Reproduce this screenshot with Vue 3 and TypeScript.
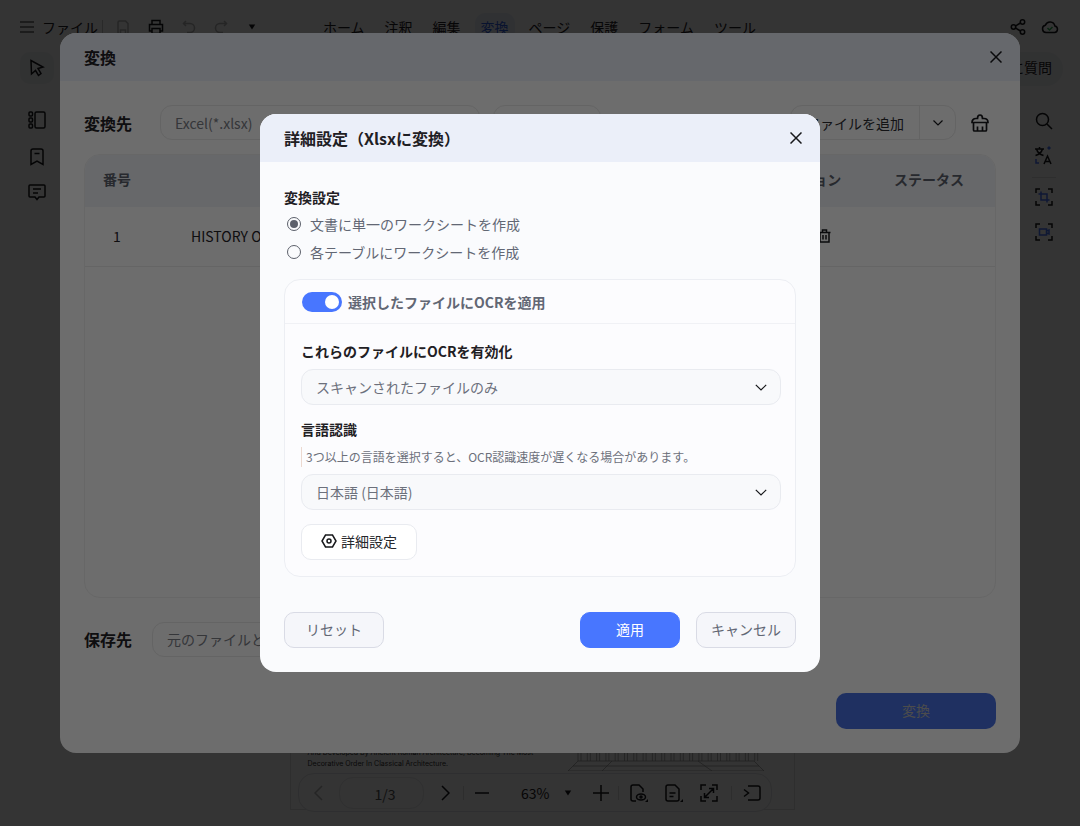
<script setup lang="ts">
const menus = ['ホーム', '注釈', '編集', '変換', 'ページ', '保護', 'フォーム', 'ツール']
const activeMenu = '変換'
const columnLines: number[] = Array.from({ length: 20 }, (_, i) => 10 + i * 9.3)
</script>

<template>
  <div class="app">
    <header class="topbar">
      <div class="top-left">
        <svg class="ico hamburger" width="14" height="12" viewBox="0 0 14 12"><path d="M0 1h14M0 6h14M0 11h14" /></svg>
        <span class="file-label">ファイル</span>
        <span class="top-sep"></span>
        <svg class="ico faded save" width="12" height="15" viewBox="0 0 12 15"><path d="M1 2.500a1.500 1.500 0 0 1 1.500-1.500H8.500l2.500 2.500v9a1.500 1.500 0 0 1-1.500 1.500h-7A1.500 1.500 0 0 1 1 12.500zM3.500 14v-4h5v4" /></svg>
        <svg class="ico print" width="16" height="16" viewBox="0 0 16 16"><path d="M4 5V1.500h8V5M4 12H1.500V5.500h13V12H12M4 9.500h8v5H4z" /></svg>
        <svg class="ico faded undo" width="14" height="14" viewBox="0 0 14 14"><path d="M4 1 1.500 3.500 4 6M2 3.500h6a4.500 4.500 0 0 1 0 9H5" /></svg>
        <svg class="ico faded redo" width="14" height="14" viewBox="0 0 14 14"><path d="M10 1l2.500 2.500L10 6M12 3.500H6a4.500 4.500 0 0 0 0 9h3" /></svg>
        <span class="caret top-caret"></span>
      </div>
      <nav class="menu">
        <span v-for="m in menus" :key="m" class="menu-item" :class="{ active: m === activeMenu }">{{ m }}</span>
      </nav>
      <div class="top-right">
        <svg class="ico" width="16" height="16" viewBox="0 0 16 16"><circle cx="3.500" cy="8" r="2.200" /><circle cx="12.500" cy="3" r="2.200" /><circle cx="12.500" cy="13" r="2.200" /><path d="M5.500 7l5-3M5.500 9l5 3" /></svg>
        <svg class="ico" width="18" height="16" viewBox="0 0 18 16"><path d="M5 13.500a3.700 3.700 0 0 1-.6-7.300 5 5 0 0 1 9.500.8 3.300 3.300 0 0 1-.4 6.500z" /><path class="green" d="m6.500 9 2 2 3-3" /></svg>
      </div>
    </header>

    <div class="workspace">
      <aside class="side-left">
        <div class="tool-box">
          <svg class="ico" width="16" height="18" viewBox="0 0 16 18"><path d="M2 1.500 14 8l-5 1.500 3 5-2.500 2-3-5L2.500 15z" /></svg>
        </div>
        <svg class="ico side-first" width="18" height="18" viewBox="0 0 18 18"><rect x="1" y="1" width="3.500" height="4" rx="1" /><rect x="1" y="7" width="3.500" height="4" rx="1" /><rect x="1" y="13" width="3.500" height="4" rx="1" /><rect x="7" y="1" width="10" height="16" rx="1.500" /></svg>
        <svg class="ico side-mark" width="14" height="18" viewBox="0 0 14 18"><path d="M1 3a2 2 0 0 1 2-2h8a2 2 0 0 1 2 2v13.500L7 13l-6 3.500zM4.500 5.500h5" /></svg>
        <svg class="ico" width="18" height="17" viewBox="0 0 18 17"><path d="M1 2a1 1 0 0 1 1-1h14a1 1 0 0 1 1 1v10a1 1 0 0 1-1 1h-5l-2 2.500L7 13H2a1 1 0 0 1-1-1zM5 5h8M5 9h5" /></svg>
      </aside>

      <main class="doc-area">
        <div class="doc-page">
          <div class="doc-strip">
            <p class="doc-text">And Developed By Ancient Roman Architecture, Becoming The Most<br />Decorative Order In Classical Architecture.</p>
            <svg class="colonnade" width="196" height="22" viewBox="0 0 196 22">
              <path v-for="x in columnLines" :key="x" :d="`M${x} 0v12M${x + 3} 0v12`" />
              <path d="M10 12h176M10 12 0 22M186 12l10 10M0 22h196M5 17h186M44 12l-10 10M130 12l14 10" />
            </svg>
          </div>
        </div>
      </main>

      <aside class="side-right">
        <div class="ask-pill">に質問</div>
        <svg class="ico search-ico" width="18" height="18" viewBox="0 0 18 18"><circle cx="7.500" cy="7.500" r="6" /><path d="m12 12 5 5" /></svg>
        <svg class="ico translate" width="20" height="20" viewBox="0 0 20 20"><path d="M1 4h9M5.500 2v2M2.500 4c1 3.500 3.500 5.500 7 6.500M8.500 4c-1 3.500-3.500 5.500-7 6.500" /><path d="m10 19 3.500-8 3.500 8M11 16.500h5" /><path class="blue" d="M2 14v4h3" /><path class="blue fill" d="m15 1 2 2-2 2-2-2z" /></svg>
        <span class="right-sep"></span>
        <svg class="ico" width="18" height="18" viewBox="0 0 18 18"><path d="M1 5V1h4M13 1h4v4M17 13v4h-4M5 17H1v-4" /><path class="blue" d="M6 3.500V12h8.500M3.500 6H12v8.500" /></svg>
        <svg class="ico video-ico" width="18" height="18" viewBox="0 0 18 18"><path d="M1 5V1h4M13 1h4v4M17 13v4h-4M5 17H1v-4" /><path class="blue" d="M4.500 6h7v6h-7zM11.500 8l2.500-1v4l-2.500-1" /></svg>
      </aside>

      <div class="pager">
        <svg class="ico faded" width="9" height="16" viewBox="0 0 9 16"><path d="M8 1 1 8l7 7" /></svg>
        <span class="page-input">1/3</span>
        <svg class="ico next" width="9" height="16" viewBox="0 0 9 16"><path d="m1 1 7 7-7 7" /></svg>
        <span class="pager-sep"></span>
        <svg class="ico minus" width="14" height="2" viewBox="0 0 14 2"><path d="M0 1h14" /></svg>
        <span class="zoom-value">63%</span>
        <span class="caret"></span>
        <svg class="ico plus" width="16" height="16" viewBox="0 0 16 16"><path d="M0 8h16M8 0v16" /></svg>
        <span class="pager-sep"></span>
        <svg class="ico view-ico" width="18" height="18" viewBox="0 0 18 18"><path d="M6 17H3a2 2 0 0 1-2-2V3a2 2 0 0 1 2-2h6l4 4v3" /><ellipse cx="11" cy="13" rx="4.500" ry="3" /><circle cx="11" cy="13" r="1" /><path class="fill" d="M18 15v3h-3z" /></svg>
        <svg class="ico doc-ico" width="18" height="18" viewBox="0 0 18 18"><path d="M3 1h7l4 4v10a2 2 0 0 1-2 2H3a2 2 0 0 1-2-2V3a2 2 0 0 1 2-2zM4.500 9h6M4.500 12.500h4" /><path class="fill" d="M18 15v3h-3z" /></svg>
        <svg class="ico fit-ico" width="18" height="18" viewBox="0 0 18 18"><path d="M1 6V1h5M12 1h5v5M17 12v5h-5M6 17H1v-5M4.500 13.500l9-9M9 4.500h4.500V9M4.500 9v4.500H9" /></svg>
        <span class="pager-sep"></span>
        <svg class="ico" width="18" height="16" viewBox="0 0 18 16"><path d="M5 1h10a2 2 0 0 1 2 2v10a2 2 0 0 1-2 2H5M1 4.500 5.500 8 1 11.500" /></svg>
      </div>
    </div>

    <div class="overlay">
      <section class="dialog convert">
        <header class="dialog-head convert-head">
          <h2>変換</h2>
          <svg class="ico close" width="12" height="12" viewBox="0 0 12 12"><path d="m.5.5 11 11M11.500.5l-11 11" /></svg>
        </header>
        <div class="convert-body">
          <div class="row">
            <label class="row-label">変換先</label>
            <div class="field format-field">Excel(*.xlsx)</div>
            <div class="field more-field"></div>
            <div class="add-group">
              <span class="add-text">ファイルを追加</span>
              <span class="add-arrow">
                <svg class="ico thin" width="10" height="6" viewBox="0 0 10 6"><path d="m.5.5 4.500 4.500L9.500.5" /></svg>
              </span>
            </div>
            <svg class="ico basket" width="18" height="18" viewBox="0 0 18 18"><path d="M1 8.500c0-2.500 1.500-4 4-4h1.500C6.500 2.500 7.500 1 9 1s2.500 1.500 2.500 3.500H13c2.500 0 4 1.500 4 4zM2.500 8.500V16a1 1 0 0 0 1 1h11a1 1 0 0 0 1-1V8.500M6.500 12.500V17M11.500 12.500V17" /></svg>
          </div>
          <div class="table">
            <div class="table-head">
              <span class="col-no">番号</span>
              <span class="col-action">アクション</span>
              <span class="col-status">ステータス</span>
            </div>
            <div class="table-row">
              <span class="cell-no">1</span>
              <span class="cell-name">HISTORY OF ARCHITECTURE</span>
              <svg class="ico row-trash" width="13" height="14" viewBox="0 0 13 14"><path d="M.5 3.500h12M2 3.500V13h9V3.500M4.500 3.500V1h4v2.500M5 6v4.500M8 6v4.500" /></svg>
            </div>
          </div>
          <div class="row save-row">
            <label class="row-label">保存先</label>
            <div class="field save-field">元のファイルと同じフォルダ</div>
          </div>
          <div class="convert-foot">
            <button class="convert-btn">変換</button>
          </div>
        </div>
      </section>
    </div>

    <div class="overlay">
      <section class="dialog settings">
        <header class="dialog-head settings-head">
          <h2>詳細設定（Xlsxに変換）</h2>
          <svg class="ico close" width="12" height="12" viewBox="0 0 12 12"><path d="m.5.5 11 11M11.500.5l-11 11" /></svg>
        </header>
        <div class="settings-body">
          <h3 class="group-title">変換設定</h3>
          <label class="radio-row"><span class="radio checked"></span>文書に単一のワークシートを作成</label>
          <label class="radio-row"><span class="radio"></span>各テーブルにワークシートを作成</label>

          <div class="ocr-card">
            <div class="ocr-head">
              <span class="switch"><span class="knob"></span></span>
              <span class="ocr-title">選択したファイルにOCRを適用</span>
            </div>
            <div class="ocr-body">
              <h4 class="ocr-label">これらのファイルにOCRを有効化</h4>
              <div class="select">
                <span>スキャンされたファイルのみ</span>
                <svg class="ico thin" width="12" height="7" viewBox="0 0 12 7"><path d="m.8.800 5.200 5.200L11.200.8" /></svg>
              </div>
              <h4 class="ocr-label lang-label">言語認識</h4>
              <p class="hint">3つ以上の言語を選択すると、OCR認識速度が遅くなる場合があります。</p>
              <div class="select">
                <span>日本語 (日本語)</span>
                <svg class="ico thin" width="12" height="7" viewBox="0 0 12 7"><path d="m.8.800 5.200 5.200L11.200.8" /></svg>
              </div>
              <button class="detail-btn">
                <svg class="ico" width="16" height="14" viewBox="0 0 16 14"><path d="M4.500 1h7L15 7l-3.500 6h-7L1 7z" /><circle cx="8" cy="7" r="2" /></svg>
                詳細設定
              </button>
            </div>
          </div>

          <div class="settings-foot">
            <button class="btn">リセット</button>
            <span class="foot-right">
              <button class="btn primary">適用</button>
              <button class="btn">キャンセル</button>
            </span>
          </div>
        </div>
      </section>
    </div>
  </div>
</template>

<style scoped>
.app {
  position: relative;
  width: 1080px;
  height: 826px;
  overflow: hidden;
  background: #fff;
  color: #1f2024;
  font-family: "Noto Sans CJK JP", "Noto Sans", sans-serif;
  font-size: 14px;
  display: flex;
  flex-direction: column;
}

.ico {
  fill: none;
  stroke: #17181b;
  stroke-width: 1.5;
  flex: none;
}
.ico.thin {
  stroke-width: 1.2;
}
.ico .fill {
  fill: #17181b;
  stroke: none;
}
.ico .blue {
  stroke: #4876ff;
}
.ico .blue.fill {
  fill: #4876ff;
  stroke: none;
}
.ico .green {
  stroke: #2fb45a;
}
.faded {
  opacity: 0.3;
}

.caret {
  width: 0;
  height: 0;
  border-left: 4px solid transparent;
  border-right: 4px solid transparent;
  border-top: 6px solid #17181b;
}

.topbar {
  height: 54px;
  display: flex;
  align-items: center;
  flex: none;
  padding: 0 21px 0 20px;
}
.top-left {
  display: flex;
  align-items: center;
  width: 297px;
  flex: none;
}
.hamburger {
  stroke-width: 1.2;
}
.file-label {
  margin-left: 8px;
}
.top-sep {
  width: 1px;
  height: 14px;
  background: #ccc;
  margin: 0 14px 0 4px;
}
.print {
  margin-left: 19px;
}
.undo {
  margin-left: 18px;
}
.redo {
  margin-left: 18px;
}
.top-caret {
  margin-left: 20px;
  transform: scale(0.8);
}
.menu {
  display: flex;
  gap: 8px;
}
.menu-item {
  padding: 0 6px;
  height: 28px;
  line-height: 28px;
  border-radius: 10px;
  white-space: nowrap;
}
.menu-item.active {
  color: #2f5fe8;
  background: #eef2fc;
}
.top-right {
  margin-left: auto;
  display: flex;
  align-items: center;
  gap: 15px;
}

.workspace {
  position: relative;
  flex: 1;
  display: flex;
  min-height: 0;
}
.side-left {
  width: 74px;
  display: flex;
  flex-direction: column;
  align-items: center;
  gap: 18px;
  flex: none;
}
.tool-box {
  width: 34px;
  height: 32px;
  margin-top: -2px;
  border-radius: 10px;
  background: #f4f5f8;
  display: flex;
  align-items: center;
  justify-content: center;
}
.side-first {
  margin-top: 9px;
}
.side-mark {
  margin-top: 1px;
}
.doc-area {
  flex: 1;
  display: flex;
  justify-content: center;
  min-width: 0;
}
.doc-page {
  width: 505px;
  height: 756px;
  box-sizing: border-box;
  margin-top: 0;
  margin-left: 4px;
  border: 1px solid #e4e4e4;
  display: flex;
  flex-direction: column;
  justify-content: flex-end;
}
.doc-strip {
  display: flex;
  justify-content: space-between;
  height: 62px;
  padding: 0 30px 0 17px;
}
.doc-text {
  margin: 0;
  font-family: "Inter", sans-serif;
  font-size: 7px;
  line-height: 11px;
  color: #333;
  white-space: nowrap;
}
.colonnade {
  margin-top: 2px;
  stroke: #888;
  stroke-width: 0.6;
  fill: none;
  flex: none;
}
.side-right {
  width: 74px;
  flex: none;
  display: flex;
  flex-direction: column;
  align-items: center;
  gap: 15px;
  padding-left: 2px;
  box-sizing: border-box;
}
.ask-pill {
  position: absolute;
  right: 17px;
  top: -2px;
  height: 34px;
  line-height: 30px;
  padding: 0 11px;
  border-radius: 17px;
  background: #f4f5f8;
}
.search-ico {
  margin-top: 58px;
}
.right-sep {
  width: 24px;
  height: 1px;
  background: #e4e4e4;
  margin: -3px 0 -5px;
}
.video-ico {
  margin-top: 2px;
}

.pager {
  position: absolute;
  left: 298px;
  top: 719px;
  width: 474px;
  height: 39px;
  box-sizing: border-box;
  border: 1px solid #e4e5ea;
  border-radius: 16px;
  background: #fff;
  display: flex;
  align-items: center;
  padding-left: 15px;
}
.page-input {
  width: 85px;
  height: 32px;
  line-height: 32px;
  margin-left: 16px;
  border: 1px solid #ebecef;
  border-radius: 14px;
  text-align: center;
  box-sizing: border-box;
  padding-left: 7px;
  color: #555;
}
.next {
  margin-left: 17px;
}
.pager-sep {
  width: 1px;
  height: 14px;
  background: #ddd;
  margin-left: 13px;
}
.minus {
  margin-left: 11px;
}
.zoom-value {
  margin-left: 32px;
}
.zoom-value + .caret {
  margin-left: 15px;
  transform: scale(0.8);
}
.plus {
  margin-left: 21px;
}
.plus + .pager-sep {
  margin-left: 9px;
}
.view-ico {
  margin-left: 11px;
}
.doc-ico {
  margin-left: 17px;
}
.fit-ico {
  margin-left: 17px;
}
.fit-ico + .pager-sep {
  margin-left: 13px;
}
.fit-ico + .pager-sep + svg {
  margin-left: 11px;
}

.overlay {
  position: absolute;
  inset: 0;
  background: rgba(0, 0, 0, 0.55);
  display: flex;
  align-items: center;
  justify-content: center;
  padding-bottom: 40px;
  box-sizing: border-box;
}
.dialog {
  border-radius: 16px;
  overflow: hidden;
  display: flex;
  flex-direction: column;
}
.dialog-head {
  height: 48px;
  flex: none;
  display: flex;
  align-items: center;
  justify-content: space-between;
  padding: 0 18px 0 24px;
}
.dialog-head h2 {
  margin: 0;
  font-size: 16px;
  font-weight: 700;
}
.convert {
  width: 960px;
  height: 720px;
  background: #f1f1f1;
}
.convert-head {
  background: #e3e7f0;
}
.convert-body {
  flex: 1;
  display: flex;
  flex-direction: column;
  padding: 24px 24px;
}
.row {
  display: flex;
  align-items: center;
  height: 35px;
}
.row-label {
  font-size: 16px;
  font-weight: 700;
  width: 76px;
  flex: none;
}
.field {
  height: 35px;
  box-sizing: border-box;
  line-height: 33px;
  border: 1px solid #dedede;
  border-radius: 12px;
  padding: 0 14px;
  color: #75787f;
  white-space: nowrap;
  overflow: hidden;
}
.format-field {
  width: 320px;
  line-height: 35px;
}
.more-field {
  width: 108px;
  margin-left: 13px;
}
.add-group {
  margin-left: auto;
  width: 166px;
  height: 35px;
  box-sizing: border-box;
  border: 1px solid #dedede;
  border-radius: 12px;
  display: flex;
  align-items: center;
  margin-right: 15px;
  overflow: hidden;
}
.add-text {
  flex: 1;
  text-align: right;
  padding-right: 15px;
  color: #2a2b2f;
}
.add-arrow {
  width: 35px;
  height: 100%;
  border-left: 1px solid #dedede;
  display: flex;
  align-items: center;
  justify-content: center;
}
.basket {
  margin-right: 7px;
  stroke-width: 1.7;
}
.table {
  margin-top: 14px;
  height: 444px;
  box-sizing: border-box;
  border: 1px solid #e4e4e4;
  border-radius: 16px;
  overflow: hidden;
  flex: none;
}
.table-head {
  height: 52px;
  box-sizing: border-box;
  padding-bottom: 4px;
  background: #e5e7ec;
  display: flex;
  align-items: center;
  font-weight: 700;
  color: #585c66;
  position: relative;
}
.col-no {
  margin-left: 18px;
}
.col-action {
  position: absolute;
  left: 687px;
}
.col-status {
  position: absolute;
  left: 809px;
}
.table-row {
  height: 60px;
  box-sizing: border-box;
  padding-bottom: 2px;
  border-bottom: 1px solid #e0e0e0;
  display: flex;
  align-items: center;
  position: relative;
}
.cell-no {
  width: 64px;
  text-align: center;
}
.cell-name {
  margin-left: 42px;
  white-space: nowrap;
}
.row-trash {
  position: absolute;
  left: 733px;
}
.save-row {
  margin-top: 24px;
}
.save-row .row-label {
  width: 68px;
  padding-bottom: 2px;
}
.save-field {
  width: 400px;
}
.convert-foot {
  margin-top: auto;
  display: flex;
  justify-content: flex-end;
}
.convert-btn {
  width: 160px;
  height: 36px;
  border: none;
  border-radius: 10px;
  background: #466cd8;
  color: #a8a8a8;
  font: inherit;
  padding: 0 0 2px;
}

.settings {
  width: 560px;
  height: 558px;
  background: #fafbfd;
}
.settings-head {
  background: #ebeff9;
}
.settings-body {
  flex: 1;
  display: flex;
  flex-direction: column;
  padding: 23px 24px 24px;
}
.group-title {
  margin: 0 0 1px;
  font-size: 14px;
  line-height: 24px;
  font-weight: 700;
}
.radio-row {
  display: flex;
  align-items: center;
  height: 28px;
  padding-left: 3px;
  color: #626774;
}
.radio {
  width: 12px;
  height: 12px;
  border: 1.5px solid #5c606b;
  border-radius: 50%;
  margin-right: 9px;
  position: relative;
  flex: none;
}
.radio.checked::after {
  content: "";
  position: absolute;
  inset: 2px;
  border-radius: 50%;
  background: #5c606b;
}
.ocr-card {
  margin-top: 13px;
  height: 298px;
  box-sizing: border-box;
  border: 1px solid #eceef3;
  border-radius: 16px;
  background: #fcfcfe;
  display: flex;
  flex-direction: column;
}
.ocr-head {
  height: 44px;
  flex: none;
  box-sizing: border-box;
  border-bottom: 1px solid #f0f1f5;
  display: flex;
  align-items: center;
  padding-left: 17px;
}
.switch {
  width: 40px;
  height: 20px;
  border-radius: 10px;
  background: #4876ff;
  position: relative;
  flex: none;
}
.knob {
  position: absolute;
  right: 3px;
  top: 3px;
  width: 14px;
  height: 14px;
  border-radius: 50%;
  background: #fff;
}
.ocr-title {
  margin-left: 6px;
  font-weight: 700;
  color: #626774;
}
.ocr-body {
  padding: 15px 14px 0 16px;
  display: flex;
  flex-direction: column;
}
.ocr-label {
  margin: 0;
  font-size: 14px;
  font-weight: 700;
  line-height: 24px;
}
.select {
  margin-top: 6px;
  height: 36px;
  box-sizing: border-box;
  border: 1px solid #e9ebf0;
  border-radius: 12px;
  background: #f8f9fb;
  display: flex;
  align-items: center;
  justify-content: space-between;
  padding: 0 13px 0 14px;
  color: #6c707b;
}
.lang-label {
  margin-top: 12px;
}
.hint {
  margin: 6px 0 0;
  height: 20px;
  line-height: 20px;
  font-size: 12px;
  color: #6c707b;
  border-left: 1px solid #ecd9d0;
  padding-left: 4px;
}
.hint + .select {
  margin-top: 7px;
}
.detail-btn {
  margin-top: 14px;
  width: 116px;
  height: 36px;
  border: 1px solid #e9ebf0;
  border-radius: 10px;
  background: #fff;
  font: inherit;
  color: #26272b;
  display: flex;
  align-items: center;
  justify-content: center;
  gap: 4px;
  padding: 0 0 2px;
}
.settings-foot {
  margin-top: auto;
  display: flex;
  justify-content: space-between;
}
.foot-right {
  display: flex;
  gap: 16px;
}
.btn {
  width: 100px;
  height: 36px;
  box-sizing: border-box;
  border: 1px solid #d9dbe5;
  border-radius: 10px;
  background: #f5f6fa;
  color: #626774;
  font: inherit;
  padding: 0 0 2px;
}
.btn.primary {
  background: #4876ff;
  border-color: #4876ff;
  color: #fff;
}
</style>

<style>
html,
body {
  margin: 0;
  background: #333;
}
</style>
